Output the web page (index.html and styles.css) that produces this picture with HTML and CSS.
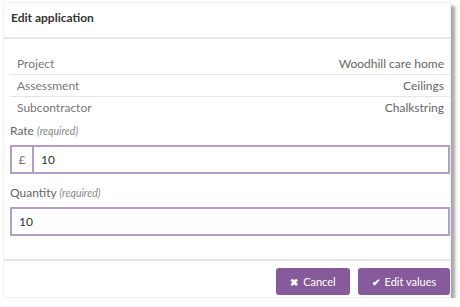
FILE: index.html
```html
<!DOCTYPE html>
<html lang="en">
<head>
  <meta charset="UTF-8" />
  <title>Edit application</title>
  <link rel="stylesheet" href="styles.css">
</head>
<body>
  <div class="modal">
    <div class="modal-header">Edit application</div>
    <div class="modal-body">
      <table class="details">
        <tr><td>Project</td><td class="value">Woodhill care home</td></tr>
        <tr><td>Assessment</td><td class="value">Ceilings</td></tr>
        <tr><td>Subcontractor</td><td class="value">Chalkstring</td></tr>
      </table>

      <label class="field-label">Rate <em>(required)</em></label>
      <div class="input-group">
        <span class="addon">£</span>
        <input type="text" value="10" />
      </div>

      <label class="field-label">Quantity <em>(required)</em></label>
      <div class="input-group">
        <input type="text" value="10" />
      </div>
    </div>
    <div class="modal-footer">
      <button class="btn btn-cancel"><span class="icon">&#10006;</span> Cancel</button>
      <button class="btn btn-save"><span class="icon">&#10004;</span> Edit values</button>
    </div>
  </div>
</body>
</html>
```

FILE: styles.css
```css
body {
  margin: 0;
  background: #fff;
  font-family: Lato, "Open Sans", sans-serif;
}
.modal {
  margin: 2px 0 0 3px;
  width: 448px;
  height: 296px;
  background: #fff;
  border: 1px solid #f0f0f0;
  box-sizing: border-box;
  box-shadow: 4px 4px 3px rgba(0, 0, 0, 0.35);
  display: flex;
  flex-direction: column;
}
.modal-header {
  height: 36px;
  line-height: 30px;
  padding-left: 7px;
  font-size: 12px;
  font-weight: bold;
  color: #333;
  border-bottom: 2px solid #e6e6e6;
  box-sizing: border-box;
}
.modal-body {
  padding: 14px 0 0 6px;
  height: 222px;
  box-sizing: border-box;
  border-bottom: 2px solid #e6e6e6;
}
.details {
  width: 440px;
  border-collapse: collapse;
  font-size: 12px;
  color: #777;
}
.details td {
  padding: 0 6px 0 7px;
  height: 21px;
}
.details tr + tr td {
  border-top: 1px solid #e4e4e4;
}
.details .value {
  text-align: right;
  color: #666;
}
.field-label {
  display: block;
  font-size: 12px;
  color: #666;
  height: 18px;
  line-height: 18px;
  margin: 4px 0 5px;
}
.field-label em {
  font-size: 10.5px;
  color: #888;
}
.field-label + .input-group + .field-label {
  margin-top: 10px;
}
.input-group {
  display: flex;
  width: 440px;
  height: 29px;
  border: 2px solid #b89cc8;
  box-sizing: border-box;
}
.addon {
  width: 20px;
  border-right: 2px solid #b89cc8;
  color: #8a5d9b;
  font-size: 12px;
  line-height: 25px;
  text-align: center;
}
.input-group input {
  flex: 1;
  border: none;
  outline: none;
  padding: 0 7px;
  font-family: inherit;
  font-size: 12px;
  color: #333;
}
.modal-footer {
  display: flex;
  justify-content: flex-end;
  gap: 8px;
  padding: 7px 0 0;
}
.btn {
  height: 27px;
  padding: 0;
  border: none;
  border-radius: 3px;
  background: #875b9b;
  color: #fff;
  font-family: inherit;
  font-size: 11px;
  white-space: nowrap;
  text-align: center;
}
.btn-cancel {
  width: 74px;
}
.btn-save {
  width: 92px;
}
.btn .icon {
  font-size: 10px;
  font-weight: bold;
  margin-right: 2px;
}
```
